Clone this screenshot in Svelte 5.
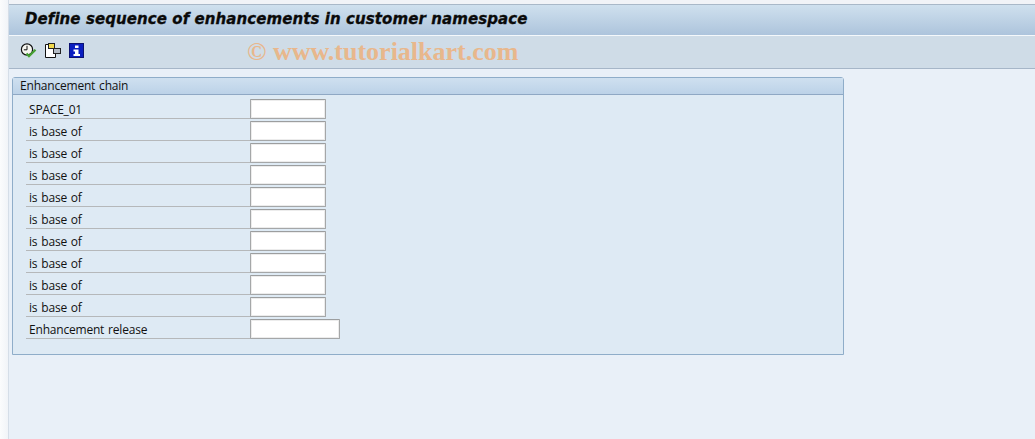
<script lang="ts">
	const rows = [
		{ label: 'SPACE_01', wide: false },
		...Array.from({ length: 9 }, () => ({ label: 'is base of', wide: false })),
		{ label: 'Enhancement release', wide: true }
	];
</script>

<div class="page">
	<aside class="edge"></aside>
	<main>
		<header class="title">
			<h1>Define sequence of enhancements in customer namespace</h1>
		</header>
		<nav class="toolbar">
			<button class="clock" aria-label="Check">
				<svg width="17" height="15" viewBox="0 0 17 15">
					<circle cx="7" cy="6.5" r="5.6" fill="#f6f6f0" stroke="#111" stroke-width="1.2" />
					<path d="M7 2.8V6.8H3.8" fill="none" stroke="#111" />
					<path d="M6.5 10.5L9 13.2L15.5 6.8" fill="none" stroke="#46a032" stroke-width="2.3" />
				</svg>
			</button>
			<button class="copy" aria-label="Copy">
				<svg width="16" height="15" viewBox="0 0 16 15">
					<path d="M0.5 1.5H5.5L10.5 6V14.5H0.5Z" fill="#fff" stroke="#111" />
					<rect x="3.5" y="0.5" width="6" height="5" fill="#f0d84c" stroke="#222" />
					<rect x="8.5" y="5.5" width="7" height="5" fill="#b4bcc6" stroke="#222" />
				</svg>
			</button>
			<button class="info" aria-label="Information">
				<svg width="15" height="15" viewBox="0 0 15 15">
					<rect width="15" height="15" fill="#0b1ec0" />
					<rect x="0.5" y="0.5" width="14" height="14" fill="none" stroke="#0c1272" />
					<path d="M6 2.5H9.5V5H6ZM4.5 6.5H9.5V11H11V13H4.5V11H6V8.5H4.5Z" fill="#fff" />
				</svg>
			</button>
			<span class="watermark">© www.tutorialkart.com</span>
		</nav>
		<section class="panel">
			<h2>Enhancement chain</h2>
			<div class="rows">
				{#each rows as row}
					<div class="row">
						<span class="label">{row.label}</span>
						<input class:wide={row.wide} type="text" aria-label={row.label} />
					</div>
				{/each}
			</div>
		</section>
	</main>
</div>

<style>
	:global(body) {
		margin: 0;
		background: #e9f0f8;
	}
	.page {
		display: flex;
		width: 1035px;
		height: 439px;
		overflow: hidden;
		font-family: 'Open Sans', 'Liberation Sans', sans-serif;
		font-size: 12px;
		letter-spacing: -0.2px;
		word-spacing: 1px;
		color: #111;
	}
	.edge {
		width: 8px;
		background: linear-gradient(to right, #fbfcfd, #f1f4f8);
		border-right: 1px solid #d5dee8;
	}
	main {
		flex: 1;
		min-width: 0;
		background: linear-gradient(to bottom, #f1f3f7 4px, #e9f0f8 4px);
		padding-top: 4px;
	}
	.title {
		box-sizing: border-box;
		height: 32px;
		border-top: 1px solid #a9b8c8;
		border-bottom: 1px solid #f4f8fb;
		background: linear-gradient(to bottom, #cfe0ee, #adc4dc);
		display: flex;
		align-items: center;
		padding: 0 0 2px 16px;
	}
	h1 {
		margin: 0;
		font: italic bold 15px 'DejaVu Sans', sans-serif;
		letter-spacing: 0.08px;
		word-spacing: 0;
		-webkit-text-stroke: 0.3px #0a0a0a;
		color: #0a0a0a;
		white-space: nowrap;
	}
	.toolbar {
		position: relative;
		box-sizing: border-box;
		height: 33px;
		background: #cfdce7;
		border-bottom: 1px solid #a6b6c8;
		display: flex;
		align-items: flex-start;
		padding: 7px 0 0 11px;
	}
	button {
		border: 0;
		padding: 0;
		background: none;
		display: flex;
	}
	.clock {
		margin-right: 8px;
	}
	.copy {
		margin-right: 8px;
	}
	.watermark {
		position: absolute;
		left: 238px;
		top: 1px;
		font: bold 26px 'Liberation Serif', serif;
		letter-spacing: 0;
		word-spacing: 0;
		color: #e8b78c;
		white-space: nowrap;
	}
	.panel {
		box-sizing: border-box;
		width: 832px;
		height: 278px;
		margin: 8px 0 0 3px;
		border: 1px solid #8fadc9;
		border-radius: 3px 3px 0 0;
		background: #deeaf4;
	}
	h2 {
		margin: 0;
		height: 16px;
		line-height: 15px;
		padding-left: 7px;
		font-size: 12px;
		font-weight: 400;
		background: linear-gradient(to bottom, #cfe0f0, #bcd2e8);
		border-bottom: 1px solid #8fa8c4;
	}
	.rows {
		display: flex;
		flex-direction: column;
		gap: 2px;
		padding: 4px 0 0 13px;
	}
	.row {
		display: flex;
		height: 20px;
	}
	.label {
		box-sizing: border-box;
		width: 224px;
		padding: 3px 0 0 3px;
		line-height: 15px;
		border-bottom: 1px solid #b5b8ba;
	}
	input {
		box-sizing: border-box;
		width: 76px;
		height: 20px;
		margin: 0;
		padding: 0;
		border: 1px solid #a5a7a8;
		border-top-color: #9c9e9f;
		border-radius: 1px;
		box-shadow: inset 0 0 0 1px #ececec;
		background: #fff;
	}
	input.wide {
		width: 90px;
	}
</style>
